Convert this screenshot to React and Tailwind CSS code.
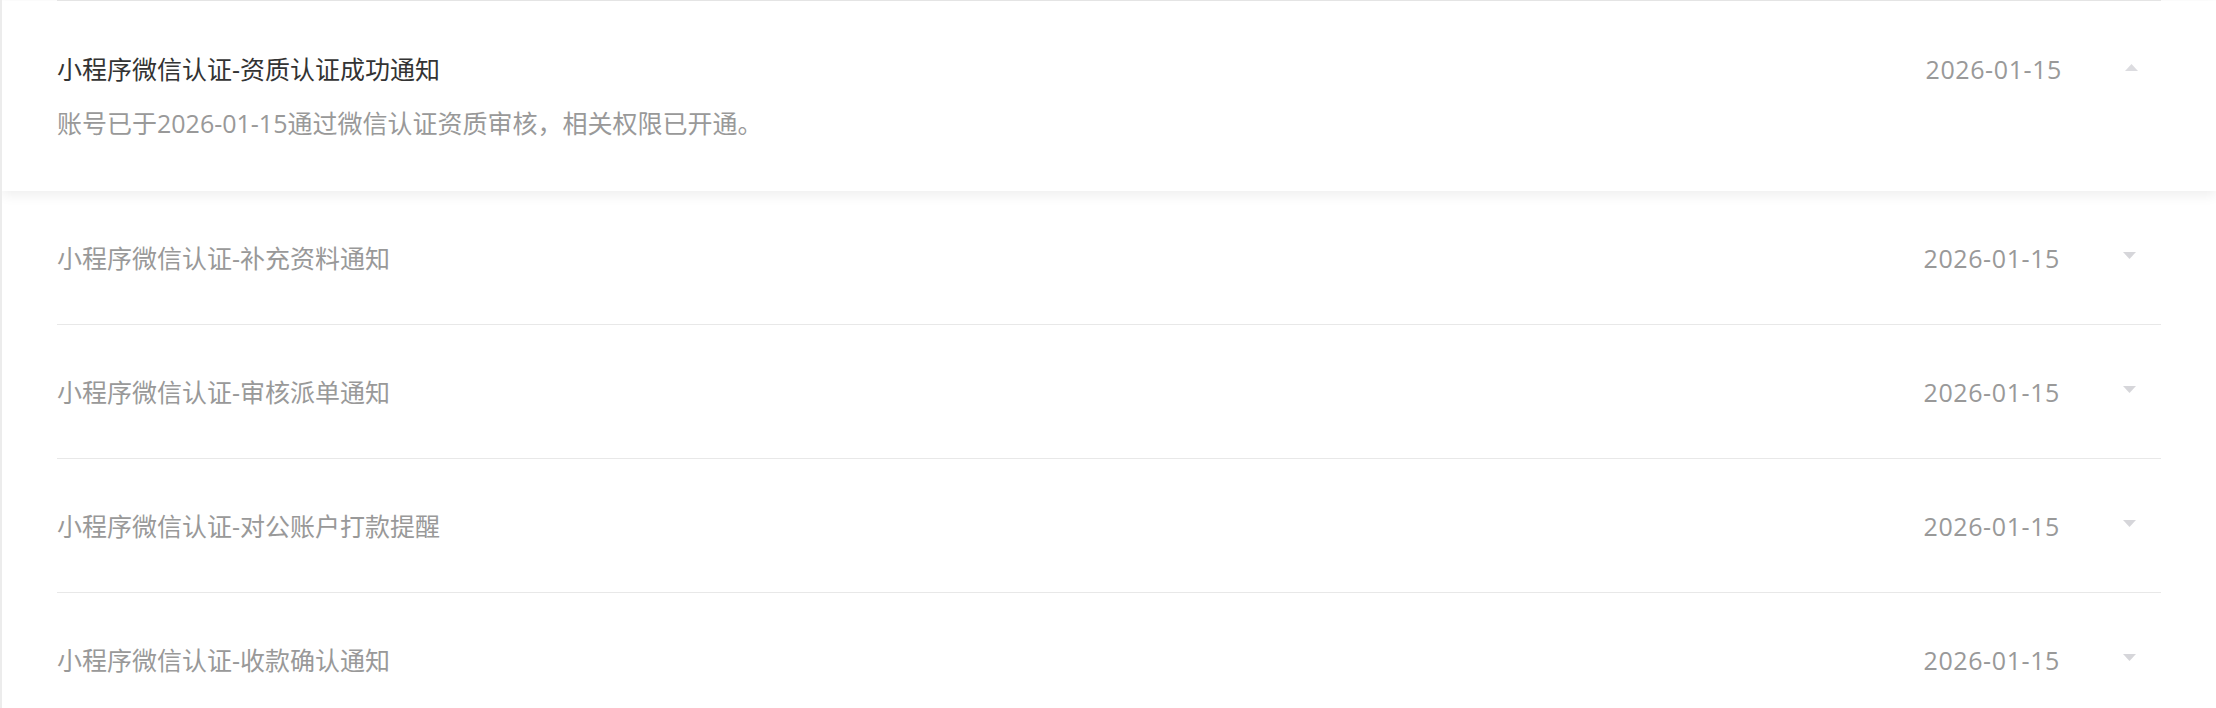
import React from 'react';

const notices = [
  { id: 1, title: '小程序微信认证-资质认证成功通知', date: '2026-01-15', content: '账号已于2026-01-15通过微信认证资质审核，相关权限已开通。' },
  { id: 2, title: '小程序微信认证-补充资料通知', date: '2026-01-15' },
  { id: 3, title: '小程序微信认证-审核派单通知', date: '2026-01-15' },
  { id: 4, title: '小程序微信认证-对公账户打款提醒', date: '2026-01-15' },
  { id: 5, title: '小程序微信认证-收款确认通知', date: '2026-01-15' },
];

const Caret = ({ up }) => (
  <svg width="13" height="7" viewBox="0 0 13 7" className={up ? 'text-[#dcdce0]' : 'text-[#d6d6da]'}>
    {up ? <polygon points="0,7 13,7 6.5,0" fill="currentColor" /> : <polygon points="0,0 13,0 6.5,7" fill="currentColor" />}
  </svg>
);

export default function App() {
  const [open, setOpen] = React.useState(1);

  return (
    <div className="relative min-h-[708px] bg-white border-l-2 border-[#ececec] overflow-hidden font-['Open_Sans','Noto_Sans_CJK_SC',sans-serif] text-[25px]">
      <div className="h-px bg-[#e8e8e8] mx-[55px]" />
      {notices.map((n) =>
        n.id === open ? (
          <div
            key={n.id}
            className="relative z-10 h-[190px] bg-white pl-[55px] pr-[53px] pt-[51px] shadow-[0_4px_12px_rgba(0,0,0,0.07)] cursor-pointer"
            onClick={() => setOpen(null)}
          >
            <div className="flex items-center h-[36px]">
              <div className="flex-1 text-[#333333]">{n.title}</div>
              <div className="text-[#999999] tracking-[0.6px]">{n.date}</div>
              <div className="ml-[63px] mr-[25px] w-[13px] flex -mt-[6px]">
                <Caret up />
              </div>
            </div>
            <div className="mt-[17px] leading-[36px] text-[#999999]">{n.content}</div>
          </div>
        ) : (
          <div
            key={n.id}
            className="mx-[55px] h-[134px] border-b border-[#e8e8e8] flex items-center pt-[2px] cursor-pointer"
            onClick={() => setOpen(n.id)}
          >
            <div className="flex-1 text-[#999999]">{n.title}</div>
            <div className="text-[#999999] tracking-[0.6px]">{n.date}</div>
            <div className="ml-[63px] mr-[25px] w-[13px] flex -mt-[6px]">
              <Caret />
            </div>
          </div>
        )
      )}
    </div>
  );
}
